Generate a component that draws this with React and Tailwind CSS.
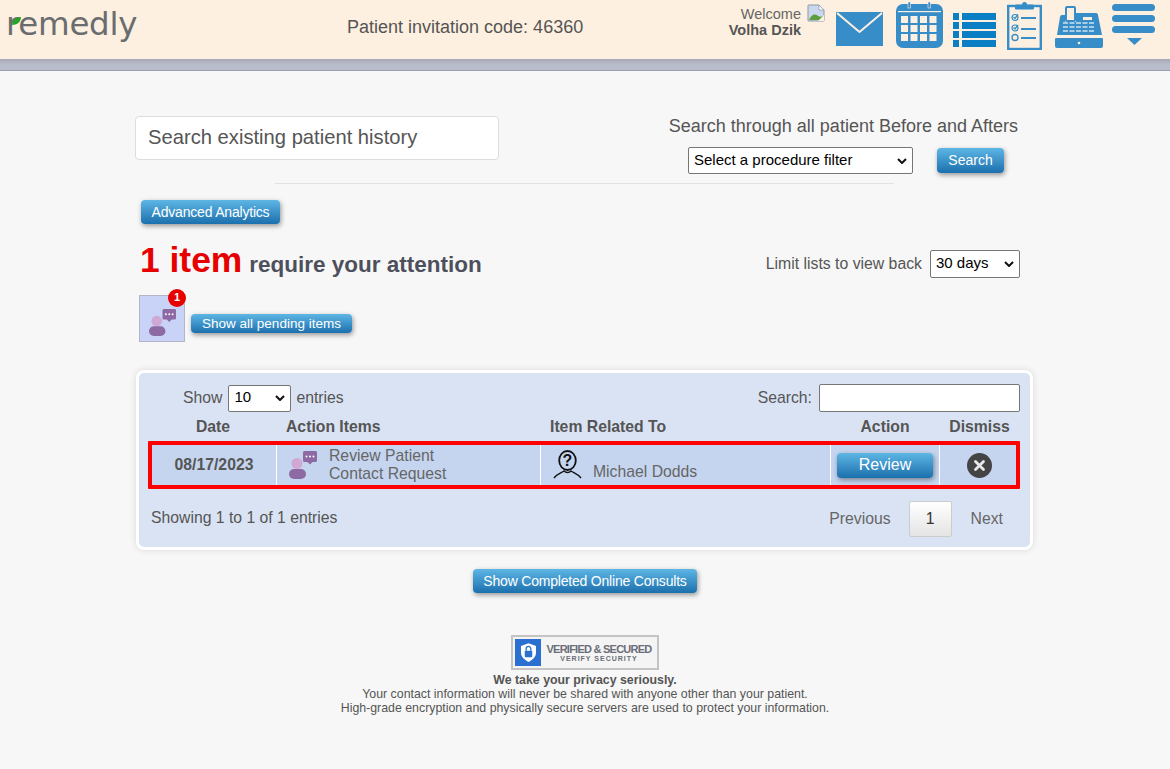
import React from 'react';

const Btn = ({ className = '', children }) => (
  <button className={`bg-linear-to-b from-[#5db6e4] to-[#1a70ae] text-white rounded-[4px] shadow-[1px_2px_5px_rgba(0,0,0,0.4)] text-center whitespace-nowrap ${className}`}>
    {children}
  </button>
);

const Select = ({ className = '', textSize = 'text-[15px]', label }) => (
  <div className={`relative ${className}`}>
    <select className={`appearance-none w-full h-full bg-white border border-[#767676] rounded-[2px] text-black pl-[5px] pb-[1px] ${textSize}`}>
      <option>{label}</option>
    </select>
    <svg viewBox="0 0 10 6" className="absolute right-[6px] top-1/2 -mt-[3px] w-[10px] h-[6px] pointer-events-none">
      <path d="M1 1l4 4 4-4" fill="none" stroke="#111" strokeWidth="2" />
    </svg>
  </div>
);

const ChatIcon = ({ className = '' }) => (
  <svg viewBox="0 0 28 28" className={className}>
    <circle cx="8" cy="12.500" r="5.500" fill="#cfa8d3" />
    <rect x="0" y="18" width="17" height="10" rx="5" fill="#8d6aa3" />
    <path d="M14 1.500a1.500 1.500 0 0 1 1.500-1.500h11a1.500 1.500 0 0 1 1.500 1.500v8a1.500 1.500 0 0 1-1.500 1.500h-3l-2.500 2.500-2.500-2.500h-3a1.500 1.500 0 0 1-1.500-1.500z" fill="#8d6aa3" />
    <circle cx="17.500" cy="5.500" r="1" fill="#fff" />
    <circle cx="21" cy="5.500" r="1" fill="#fff" />
    <circle cx="24.500" cy="5.500" r="1" fill="#fff" />
  </svg>
);

const MailIcon = () => (
  <svg viewBox="0 0 47 34" className="w-[47px] h-[34px]">
    <rect width="47" height="34" fill="#378dc7" />
    <path d="M1 1l22.500 19L46 1" fill="none" stroke="#fdf0e0" strokeWidth="2" />
  </svg>
);

const CalendarIcon = () => (
  <svg viewBox="0 0 47 46" className="w-[47px] h-[46px]">
    <path d="M7 2h33a7 7 0 0 1 7 7v30a7 7 0 0 1-7 7H7a7 7 0 0 1-7-7V9a7 7 0 0 1 7-7z" fill="#378dc7" />
    <rect x="12" y="0" width="2.500" height="6" fill="#378dc7" stroke="#fdf0e0" strokeWidth="0.6" />
    <rect x="32" y="0" width="2.500" height="6" fill="#378dc7" stroke="#fdf0e0" strokeWidth="0.6" />
    <rect x="2" y="9" width="43" height="1.200" fill="#fdf0e0" />
    {[14, 23, 32].map((y) =>
      [5, 14.5, 24, 33.5].map((x) => <rect key={`${x}-${y}`} x={x} y={y} width="7" height="7" fill="#fdf0e0" />)
    )}
  </svg>
);

const ListIcon = () => (
  <svg viewBox="0 0 43 34" className="w-[43px] h-[34px]" fill="#0a7fc4">
    {[0, 9, 18, 27].map((y) => (
      <g key={y}>
        <rect x="0" y={y} width="6" height="7" />
        <rect x="9" y={y} width="34" height="7" />
      </g>
    ))}
  </svg>
);

const ClipboardIcon = () => (
  <svg viewBox="0 0 35 48" className="w-[35px] h-[48px]">
    <rect x="1.200" y="4" width="32.600" height="43" fill="#fdf0e0" stroke="#378dc7" strokeWidth="2.400" />
    <circle cx="17.500" cy="2.500" r="2.500" fill="#378dc7" />
    <rect x="8" y="2.500" width="19" height="5" rx="1" fill="#378dc7" />
    {[15, 26, 35].map((y) => (
      <rect key={y} x="14" y={y} width="15" height="2" fill="#378dc7" />
    ))}
    <circle cx="8" cy="15.500" r="3" fill="none" stroke="#378dc7" strokeWidth="1.200" />
    <circle cx="8" cy="26" r="3" fill="none" stroke="#378dc7" strokeWidth="1.200" />
    <circle cx="8" cy="35.500" r="3" fill="none" stroke="#378dc7" strokeWidth="1.400" />
    <path d="M6.500 15l1.500 1.500 3-4M6.500 25.500l1.500 1.500 3-4" fill="none" stroke="#378dc7" strokeWidth="1.300" />
  </svg>
);

const RegisterIcon = () => (
  <svg viewBox="0 0 48 42" className="w-[48px] h-[42px]">
    <rect x="11" y="1" width="9" height="14" rx="1" fill="none" stroke="#378dc7" strokeWidth="2" />
    <path d="M7 9h3v7h11V7h20a2 2 0 0 1 2 2l4 20H2l3-18a2 2 0 0 1 2-2z" fill="#378dc7" />
    <rect x="28" y="11" width="9" height="3" fill="#fdf0e0" />
    {[16, 20, 24].map((y) =>
      [8, 14.5, 21, 27.5, 34].map((x) => <rect key={`${x}-${y}`} x={x} y={y} width="5" height="2" fill="#a8cde6" />)
    )}
    <path d="M1 32h46a1 1 0 0 1 1 1v7a2 2 0 0 1-2 2H2a2 2 0 0 1-2-2v-7a1 1 0 0 1 1-1z" fill="#378dc7" />
    <circle cx="24" cy="37" r="1.300" fill="#fdf0e0" />
  </svg>
);

const MenuIcon = () => (
  <svg viewBox="0 0 44 42" className="w-[44px] h-[42px]" fill="#378dc7">
    <rect x="0" y="0" width="43" height="7" rx="3.500" />
    <rect x="0" y="11" width="43" height="7" rx="3.500" />
    <rect x="0" y="22" width="43" height="7" rx="3.500" />
    <path d="M15 34h15l-7.500 7z" />
  </svg>
);

const BrokenImage = () => (
  <svg viewBox="0 0 18 18" className="w-[18px] h-[18px]">
    <path d="M1.500 1h10.500l5 5v10.500a.5.5 0 0 1-.5.5H1.500a.5.5 0 0 1-.5-.5V1.500a.5.5 0 0 1 .5-.5z" fill="#c9d8ee" stroke="#8d98a8" />
    <path d="M12 1v5h5z" fill="#fff" stroke="#8d98a8" strokeWidth="0.7" />
    <path d="M2 16c2-5 6-7 9-4 2 1 3 1 5 0v4z" fill="#5d9e3c" />
    <path d="M11 17l6-6v6z" fill="#fdf0e0" />
  </svg>
);

const PersonQuestion = () => (
  <svg viewBox="0 0 30 30" className="w-[30px] h-[30px]">
    <ellipse cx="14.500" cy="10.500" rx="8.300" ry="9.500" fill="none" stroke="#111" strokeWidth="1.800" />
    <path d="M1 28c3-4 7-5 10-7 2 2 5 2 7 0 3 2 7 3 10 7" fill="none" stroke="#111" strokeWidth="1.400" />
    <text x="14.500" y="16" textAnchor="middle" fontSize="16" fontWeight="700" fill="#111" fontFamily="Liberation Sans">?</text>
  </svg>
);

const ShieldBadge = () => (
  <div className="w-[148px] h-[35px] border-2 border-[#c4c4c4] bg-[#f4f4f4] flex items-center pl-[2px]">
    <div className="w-[26px] h-[27px] shrink-0 bg-[#2b6fd0] flex items-center justify-center">
      <svg viewBox="0 0 16 20" className="w-[15px] h-[19px]">
        <path d="M8 0l8 3v7c0 5-4 8-8 10-4-2-8-5-8-10V3z" fill="#fff" />
        <rect x="4" y="8" width="8" height="7" rx="1" fill="#2b6fd0" />
        <path d="M5.500 8V6a2.500 2.500 0 0 1 5 0v2" fill="none" stroke="#2b6fd0" strokeWidth="1.400" />
      </svg>
    </div>
    <div className="ml-[5px] w-[106px] flex flex-col items-center whitespace-nowrap">
      <span className="text-[11px] leading-[12px] font-bold tracking-[-0.75px] text-[#6a6e78]">VERIFIED &amp; SECURED</span>
      <span className="text-[7px] leading-[8px] font-bold tracking-[1px] text-[#6a6e78]">VERIFY SECURITY</span>
    </div>
  </div>
);

const App = () => {
  return (
    <div className="min-h-[769px] bg-[#f7f7f7] text-[#555] font-['Liberation_Sans',Arial,sans-serif]">
      <header className="h-[59px] bg-[#fdf0e0] flex items-start relative">
        <div className="w-[347px] pl-[6px] pt-[4px] relative">
          <span className="font-['DejaVu_Sans',sans-serif] text-[32.500px] leading-[40px] text-[#6a6c6e] tracking-[-0.3px]">remedly</span>
          <svg viewBox="0 0 9 8" className="absolute left-[12px] top-[17px] w-[9px] h-[8px]">
            <path d="M0 8C0 3 4 0 9 0 9 5 5 8 0 8z" fill="#22a52a" />
          </svg>
        </div>
        <div className="w-[380px] pt-[17px] text-[18px] leading-[21px]">Patient invitation code: 46360</div>
        <div className="w-[80px] pt-[6px] text-right text-[14.500px] leading-[16px] pr-[6px]">
          <div className="text-[#666] whitespace-nowrap">Welcome</div>
          <div className="font-bold whitespace-nowrap">Volha Dzik</div>
        </div>
        <div className="pt-[4px] w-[29px]"><BrokenImage /></div>
        <div className="pt-[12px]"><MailIcon /></div>
        <div className="pt-[2px] ml-[13px]"><CalendarIcon /></div>
        <div className="pt-[13px] ml-[10px]"><ListIcon /></div>
        <div className="pt-[2px] ml-[11px]"><ClipboardIcon /></div>
        <div className="pt-[6px] ml-[13px]"><RegisterIcon /></div>
        <div className="pt-[4px] ml-[9px]"><MenuIcon /></div>
      </header>
      <div className="h-[12px] bg-linear-to-b from-[#a6a8b4] via-[#b9bccb] to-[#b9bccb] border-b-[1px] border-[#9a9eb0]" />

      <main className="ml-[135px] w-[898px]">
        <div className="flex justify-between pt-[45px] pr-[15px]">
          <input
            type="text"
            placeholder="Search existing patient history"
            className="w-[364px] h-[44px] bg-white border border-[#ddd] rounded-[4px] px-[12px] pb-[2px] text-[20.200px] placeholder:text-[#555]"
          />
          <div className="w-[350px] flex flex-col items-end">
            <div className="text-[18px] leading-[20px] whitespace-nowrap">Search through all patient Before and Afters</div>
            <div className="flex items-center mt-[11px] pr-[14px]">
              <Select className="w-[225px] h-[27px]" label="Select a procedure filter" />
              <Btn className="ml-[24px] w-[67px] h-[25px] text-[14px]">Search</Btn>
            </div>
          </div>
        </div>
        <div className="ml-[140px] w-[619px] mt-[9px] border-t border-[#e2e2e2]" />

        <Btn className="ml-[6px] mt-[16px] block w-[139px] h-[24px] text-[14px] tracking-[-0.2px]">Advanced Analytics</Btn>

        <div className="flex items-center justify-between mt-[14px] h-[44px] pl-[5px] pr-[13px]">
          <div className="flex items-baseline font-bold mt-[1px]">
            <span className="text-[35.400px] text-[#e60000]">1 item</span>
            <span className="ml-[7px] text-[22.500px] text-[#4d4f5c]">require your attention</span>
          </div>
          <div className="flex items-center mt-[8px]">
            <span className="text-[15.800px]">Limit lists to view back</span>
            <Select className="ml-[8px] w-[90px] h-[28px]" label="30 days" />
          </div>
        </div>

        <div className="flex items-end mt-[13px] ml-[4px]">
          <div className="relative w-[46px] h-[47px] bg-[#c9d2f7] border border-[#b4b6c8] flex items-center justify-center">
            <ChatIcon className="w-[27px] h-[27px] mt-[8px] ml-[1px]" />
            <span className="absolute left-[28px] -top-[7px] w-[18px] h-[18px] rounded-full bg-[#e60000] text-white text-[11px] leading-[17px] font-bold text-center">1</span>
          </div>
          <Btn className="ml-[6px] mb-[9px] w-[161px] h-[19px] text-[13.500px] leading-[19px]">Show all pending items</Btn>
        </div>

        <section className="ml-[1px] mt-[28px] w-[897px] h-[180px] bg-[#dae3f4] border-[3px] border-white rounded-[8px] shadow-[0_0_6px_rgba(100,100,120,0.2)] pl-[9px] pr-[10px] pt-[11px] text-[15.750px]">
          <div className="flex items-center justify-between h-[28px]">
            <div className="flex items-center pl-[35px]">
              Show
              <Select className="ml-[6px] mr-[5px] w-[63px] h-[27px]" label="10" />
              entries
            </div>
            <div className="flex items-center">
              Search:
              <input type="text" className="ml-[7px] w-[201px] h-[28px] bg-white border border-[#767676] rounded-[2px]" />
            </div>
          </div>
          <div className="grid grid-cols-[130px_264px_290px_106px_83px] font-bold h-[29px] items-center">
            <div className="text-center">Date</div>
            <div className="pl-[8px]">Action Items</div>
            <div className="pl-[8px]">Item Related To</div>
            <div className="text-center">Action</div>
            <div className="text-center">Dismiss</div>
          </div>
          <div className="border-[4px] border-[#ff0000] rounded-[1px] h-[48px] bg-[#c5d5ef] grid grid-cols-[124px_264px_290px_109px_77px]">
            <div className="flex items-center justify-center font-bold">08/17/2023</div>
            <div className="border-l border-white flex items-center pl-[12px]">
              <ChatIcon className="w-[28px] h-[28px] shrink-0" />
              <div className="ml-[12px] leading-[18px] text-[#666]">
                <div>Review Patient</div>
                <div>Contact Request</div>
              </div>
            </div>
            <div className="border-l border-white flex items-center pl-[12px]">
              <PersonQuestion />
              <span className="ml-[10px] mt-[14px] text-[#666]">Michael Dodds</span>
            </div>
            <div className="border-l border-white flex items-center justify-center">
              <Btn className="w-[96px] h-[25px] text-[16px]">Review</Btn>
            </div>
            <div className="border-l border-white flex items-center justify-center pl-[3px]">
              <svg viewBox="0 0 25 25" className="w-[25px] h-[25px]">
                <circle cx="12.500" cy="12.500" r="12.500" fill="#444" />
                <path d="M8.500 8.500l8 8M16.500 8.500l-8 8" stroke="#e8e8e8" strokeWidth="2.800" strokeLinecap="round" />
              </svg>
            </div>
          </div>
          <div className="flex items-center justify-between mt-[12px] pl-[3px]">
            <span className="-mt-[2px]">Showing 1 to 1 of 1 entries</span>
            <div className="flex items-center text-[#666]">
              <span>Previous</span>
              <span className="ml-[18px] w-[43px] h-[36px] border border-[#ccc] rounded-[2px] bg-linear-to-b from-white to-[#e4e4e4] flex items-center justify-center text-[#333]">1</span>
              <span className="ml-[19px] mr-[17px]">Next</span>
            </div>
          </div>
        </section>

        <div className="flex justify-center mt-[19px] ml-[2px]">
          <Btn className="w-[224px] h-[24px] text-[14px] tracking-[-0.2px]">Show Completed Online Consults</Btn>
        </div>

        <div className="mt-[42px] ml-[2px] flex flex-col items-center text-[12.350px] leading-[14px] text-center">
          <ShieldBadge />
          <div className="font-bold mt-[3px]">We take your privacy seriously.</div>
          <div>Your contact information will never be shared with anyone other than your patient.</div>
          <div>High-grade encryption and physically secure servers are used to protect your information.</div>
        </div>
      </main>
    </div>
  );
};

export default App;
